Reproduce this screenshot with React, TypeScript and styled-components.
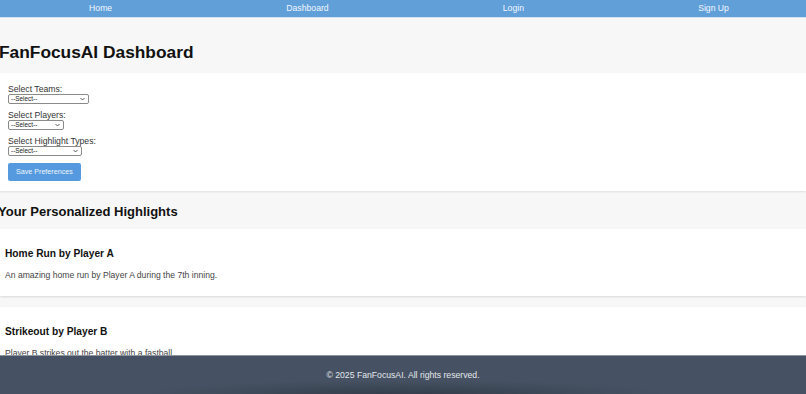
import React from "react";
import styled, { createGlobalStyle } from "styled-components";

const Global = createGlobalStyle`
  * { box-sizing: border-box; }
  html, body { margin: 0; padding: 0; }
  body {
    background: #f7f7f7;
    font-family: "Liberation Sans", Arial, Helvetica, sans-serif;
    color: #222;
    overflow: hidden;
  }
`;

const Page = styled.div`
  display: flex;
  flex-direction: column;
  min-height: 394px;
`;

const Nav = styled.nav`
  height: 18px;
  background: #619fd9;
  border-bottom: 1px solid #d2e2f3;
  display: flex;
  justify-content: space-around;
  align-items: center;
  padding-left: 2px;
  margin-right: -10px;
`;

const NavLink = styled.a`
  color: #f2f7fd;
  font-size: 8.67px;
  line-height: 10px;
  margin-top: -2px;
  text-decoration: none;
`;

const TitleBar = styled.header`
  padding: 24px 0 11px;
`;

const Title = styled.h1`
  margin: 0 0 0 -1px;
  font-size: 17.33px;
  line-height: 20px;
  font-weight: 700;
  color: #111;
`;

const FormCard = styled.section`
  background: #fff;
  padding: 11px 8px 10px;
  box-shadow: 0 1px 2px rgba(0, 0, 0, 0.1);
  margin-bottom: 2px;
  display: flex;
  flex-direction: column;
  align-items: flex-start;
`;

const Field = styled.div`
  display: flex;
  flex-direction: column;
  align-items: flex-start;
  margin-bottom: 6px;
`;

const Label = styled.label`
  display: block;
  font-size: 8.67px;
  line-height: 10px;
  color: #333;
`;

const SelectWrap = styled.div<{ $w: number }>`
  position: relative;
  width: ${(p) => p.$w}px;
  height: 10px;
  font-size: 0;
  line-height: 0;
`;

const Select = styled.select`
  appearance: none;
  -webkit-appearance: none;
  display: block;
  width: 100%;
  height: 10px;
  margin: 0;
  padding: 0 0 0 2px;
  border: 1px solid #8a8a8a;
  border-radius: 2px;
  background: #fff;
  font-family: "Liberation Sans", Arial, sans-serif;
  font-size: 6.4px;
  line-height: 8px;
  color: #222;
  outline: none;
`;

const Chevron = styled.svg`
  position: absolute;
  right: 4px;
  top: 3px;
  width: 5px;
  height: 4px;
  pointer-events: none;
`;

const SaveButton = styled.button`
  margin-top: 1px;
  height: 18px;
  padding: 0 8px;
  background: #559ade;
  border: none;
  border-radius: 2px;
  color: #eef5fc;
  font-family: "Liberation Sans", Arial, sans-serif;
  font-size: 7.15px;
  cursor: pointer;
`;

const SectionTitle = styled.h2`
  margin: 0 0 0 -2px;
  padding: 11px 0 10px;
  font-size: 13px;
  line-height: 15px;
  font-weight: 700;
  color: #111;
`;

const HighlightList = styled.div`
  display: flex;
  flex-direction: column;
  gap: 11px;
`;

const HighlightCard = styled.article`
  background: #fff;
  padding: 19px 5px 16px;
  box-shadow: 0 1px 2px rgba(0, 0, 0, 0.12);
`;

const CardTitle = styled.h3`
  margin: 0 0 10px;
  font-size: 10.2px;
  line-height: 12px;
  font-weight: 700;
  color: #111;
`;

const CardText = styled.p`
  margin: 0;
  font-size: 8.6px;
  line-height: 10px;
  color: #444;
`;

const Footer = styled.footer`
  position: fixed;
  left: 0;
  right: 0;
  bottom: 0;
  height: 39px;
  border-top: 1px solid #8d949d;
  background:
    radial-gradient(ellipse 260px 14px at 50% 100%, rgba(40, 48, 60, 0.6), rgba(40, 48, 60, 0)),
    #465263;
  display: flex;
  align-items: center;
  justify-content: center;
`;

const FooterText = styled.p`
  margin: 0;
  font-size: 8.67px;
  color: #e4e7eb;
`;

const ChevronIcon = () => (
  <Chevron viewBox="0 0 5 4">
    <path d="M0.5 1 L2.5 3 L4.5 1" fill="none" stroke="#333" strokeWidth="0.8" />
  </Chevron>
);

const fields = [
  { label: "Select Teams:", width: 81 },
  { label: "Select Players:", width: 56 },
  { label: "Select Highlight Types:", width: 74 },
];

const highlights = [
  { title: "Home Run by Player A", text: "An amazing home run by Player A during the 7th inning." },
  { title: "Strikeout by Player B", text: "Player B strikes out the batter with a fastball." },
];

export default function App() {
  return (
    <>
      <Global />
      <Page>
        <Nav>
          <NavLink href="#">Home</NavLink>
          <NavLink href="#">Dashboard</NavLink>
          <NavLink href="#">Login</NavLink>
          <NavLink href="#">Sign Up</NavLink>
        </Nav>
        <TitleBar>
          <Title>FanFocusAI Dashboard</Title>
        </TitleBar>
        <FormCard>
          {fields.map((f) => (
            <Field key={f.label}>
              <Label>{f.label}</Label>
              <SelectWrap $w={f.width}>
                <Select defaultValue="">
                  <option value="">--Select--</option>
                </Select>
                <ChevronIcon />
              </SelectWrap>
            </Field>
          ))}
          <SaveButton>Save Preferences</SaveButton>
        </FormCard>
        <SectionTitle>Your Personalized Highlights</SectionTitle>
        <HighlightList>
          {highlights.map((h) => (
            <HighlightCard key={h.title}>
              <CardTitle>{h.title}</CardTitle>
              <CardText>{h.text}</CardText>
            </HighlightCard>
          ))}
        </HighlightList>
        <Footer>
          <FooterText>© 2025 FanFocusAI. All rights reserved.</FooterText>
        </Footer>
      </Page>
    </>
  );
}
